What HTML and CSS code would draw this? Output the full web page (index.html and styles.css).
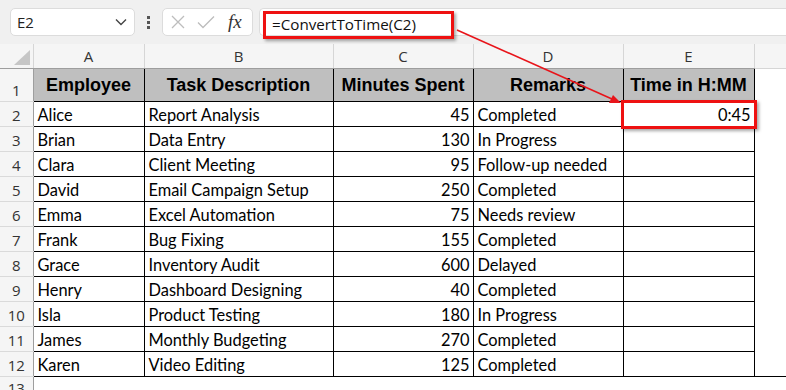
FILE: index.html
```html
<!DOCTYPE html>
<html>
<head>
<meta charset="utf-8">
<link rel="stylesheet" href="styles.css">
</head>
<body>
<div class="app">
  <div class="toolbar">
    <div class="namebox">
      <span class="name">E2</span>
      <svg class="chev" width="12" height="8" viewBox="0 0 12 8"><path d="M1 1.5 L6 6.5 L11 1.5" fill="none" stroke="#444" stroke-width="1.4"/></svg>
    </div>
    <div class="dots"><i></i><i></i><i></i></div>
    <div class="fxbox">
      <svg width="14" height="14" viewBox="0 0 14 14"><path d="M1 1 L13 13 M13 1 L1 13" stroke="#bdbdbd" stroke-width="1.3" fill="none"/></svg>
      <svg width="18" height="14" viewBox="0 0 18 14"><path d="M1 7.5 L6 12.5 L17 1.5" stroke="#bdbdbd" stroke-width="1.3" fill="none"/></svg>
      <span class="fx">fx</span>
    </div>
    <div class="formula">
      <span class="ftext">=ConvertToTime(C2)</span>
    </div>
  </div>
  <table class="sheet">
    <colgroup>
      <col class="c-rh"><col class="c-a"><col class="c-b"><col class="c-c"><col class="c-d"><col class="c-e"><col class="c-f">
    </colgroup>
    <tr class="colhdr">
      <th class="corner"><span class="tri"></span></th><th>A</th><th>B</th><th>C</th><th>D</th><th>E</th><th class="nob"></th>
    </tr>
    <tr class="r1">
      <th class="rh">1</th><td>Employee</td><td>Task Description</td><td>Minutes Spent</td><td>Remarks</td><td>Time in H:MM</td><td class="blank"></td>
    </tr>
    <tr><th class="rh">2</th><td>Alice</td><td>Report Analysis</td><td class="num">45</td><td>Completed</td><td class="num sel">0:45<span class="hl"></span></td><td class="blank"></td></tr>
    <tr><th class="rh">3</th><td>Brian</td><td>Data Entry</td><td class="num">130</td><td>In Progress</td><td></td><td class="blank"></td></tr>
    <tr><th class="rh">4</th><td>Clara</td><td>Client Meeting</td><td class="num">95</td><td>Follow-up needed</td><td></td><td class="blank"></td></tr>
    <tr><th class="rh">5</th><td>David</td><td>Email Campaign Setup</td><td class="num">250</td><td>Completed</td><td></td><td class="blank"></td></tr>
    <tr><th class="rh">6</th><td>Emma</td><td>Excel Automation</td><td class="num">75</td><td>Needs review</td><td></td><td class="blank"></td></tr>
    <tr><th class="rh">7</th><td>Frank</td><td>Bug Fixing</td><td class="num">155</td><td>Completed</td><td></td><td class="blank"></td></tr>
    <tr><th class="rh">8</th><td>Grace</td><td>Inventory Audit</td><td class="num">600</td><td>Delayed</td><td></td><td class="blank"></td></tr>
    <tr><th class="rh">9</th><td>Henry</td><td>Dashboard Designing</td><td class="num">40</td><td>Completed</td><td></td><td class="blank"></td></tr>
    <tr><th class="rh">10</th><td>Isla</td><td>Product Testing</td><td class="num">180</td><td>In Progress</td><td></td><td class="blank"></td></tr>
    <tr><th class="rh">11</th><td>James</td><td>Monthly Budgeting</td><td class="num">270</td><td>Completed</td><td></td><td class="blank"></td></tr>
    <tr><th class="rh">12</th><td>Karen</td><td>Video Editing</td><td class="num">125</td><td>Completed</td><td></td><td class="blank"></td></tr>
    <tr class="r13"><th class="rh">13</th><td class="blank" colspan="6"></td></tr>
  </table>
  <svg class="arrow" width="786" height="390" viewBox="0 0 786 390">
    <line x1="457" y1="30" x2="612" y2="99" stroke="#e8141a" stroke-width="1.6"/>
    <path d="M621 103 L609 103 L613 95 Z" fill="#e8141a"/>
  </svg>
</div>
</body>
</html>
```

FILE: styles.css
```css
* { box-sizing: border-box; }
html, body { margin: 0; padding: 0; background: #fff; }
body { width: 786px; height: 390px; overflow: hidden; }
.app { position: relative; width: 786px; height: 390px; }

.toolbar {
  height: 44px;
  background: #f0f0f0;
  display: flex;
  align-items: flex-start;
  padding: 8px 0 0 10px;
  font-family: "Open Sans", "Noto Sans", sans-serif;
}
.namebox {
  width: 125px; height: 28px;
  background: #fff;
  border: 1px solid #dcdcdc;
  border-radius: 5px;
  display: flex; align-items: center; justify-content: space-between;
  padding: 0 7px 0 6px;
}
.name { font-size: 15px; color: #222; }
.dots { width: 27px; height: 28px; display: flex; flex-direction: column; align-items: center; justify-content: center; gap: 2px; }
.dots i { display: block; width: 3px; height: 3px; background: #555; }
.fxbox {
  width: 91px; height: 28px;
  background: #fff;
  border: 1px solid #dcdcdc;
  border-radius: 5px;
  display: flex; align-items: center;
  padding: 0 6px 0 8px; gap: 12px;
}
.fx { font-family: "Liberation Serif", serif; font-style: italic; font-size: 19px; color: #333; margin-left: 1px; line-height: 1; position: relative; top: -1px; }
.formula {
  flex: 1; height: 28px; margin-left: 6px;
  background: #fff;
  border: 1px solid #dcdcdc; border-right: none;
  border-radius: 5px 0 0 5px;
  padding: 1px 0 0 3px;
}
.ftext {
  display: inline-block;
  height: 28px; width: 191px;
  border: 3px solid #ee1111;
  box-shadow: 2px 2px 3px rgba(0,0,0,0.35);
  font-size: 15.2px; color: #111;
  line-height: 21px;
  padding-left: 6px;
  position: relative; top: 1px;
}

.sheet {
  border-collapse: collapse;
  table-layout: fixed;
  width: 786px;
  font-family: "Lato", "Liberation Sans", sans-serif;
  font-size: 16.4px;
  color: #000;
}
.c-rh { width: 33px; }
.c-a { width: 111px; }
.c-b { width: 189px; }
.c-c { width: 140px; }
.c-d { width: 150px; }
.c-e { width: 131px; }
.c-f { width: 32px; }

.colhdr { height: 24px; }
.colhdr th {
  height: 24px;
  background: #f5f5f5;
  font-family: "Open Sans", "Noto Sans", sans-serif;
  font-weight: normal; font-size: 15px; color: #333;
  border-left: 1px solid #d6d6d6;
  border-bottom: 1px solid #9e9e9e;
  padding: 0;
  line-height: 20px;
}
.colhdr th.corner { border-left: none; position: relative; border-right: 1px solid #d6d6d6; }
.colhdr th.nob { border-bottom: 1px solid #d6d6d6; }
.tri {
  position: absolute; right: 3px; bottom: 3px;
  width: 0; height: 0;
  border-left: 16px solid transparent;
  border-bottom: 15px solid #c6c6c6;
}

th.rh {
  background: #f5f5f5;
  font-family: "Open Sans", "Noto Sans", sans-serif;
  font-weight: normal; font-size: 15px; color: #333;
  border-right: 1px solid #9e9e9e;
  border-bottom: 1px solid #dadada;
  text-align: center;
  vertical-align: bottom;
  padding: 0;
  line-height: 22px;
}

tr { height: 25px; }
td {
  border: 1px solid #000;
  padding: 0 4px;
  vertical-align: bottom;
  line-height: 22px;
  white-space: nowrap;
  overflow: visible;
}
td.blank { border: none; border-left: 1px solid #000; }
.r13 td.blank { border-left: none; border-top: 1px solid #000; }
.r13 { height: 14px; }
.r13 th.rh { border-bottom: none; vertical-align: top; }
.r1 { height: 33px; }
.r1 td {
  background: #bfbfbf;
  font-family: "Liberation Sans", Arial, sans-serif;
  font-weight: bold; font-size: 18px;
  text-align: center;
  vertical-align: middle;
  line-height: 22px;
  padding: 1px 2px 0;
}
.r1 td.blank { background: #fff; }
.num { text-align: right; padding-right: 3px; }
.sel { position: relative; }
.hl {
  position: absolute; left: -3px; top: -2px; right: -3px; bottom: -3px;
  border: 3px solid #ee1111;
  box-shadow: 2px 2px 3px rgba(0,0,0,0.35);
}
.arrow { position: absolute; left: 0; top: 0; pointer-events: none; }
```
